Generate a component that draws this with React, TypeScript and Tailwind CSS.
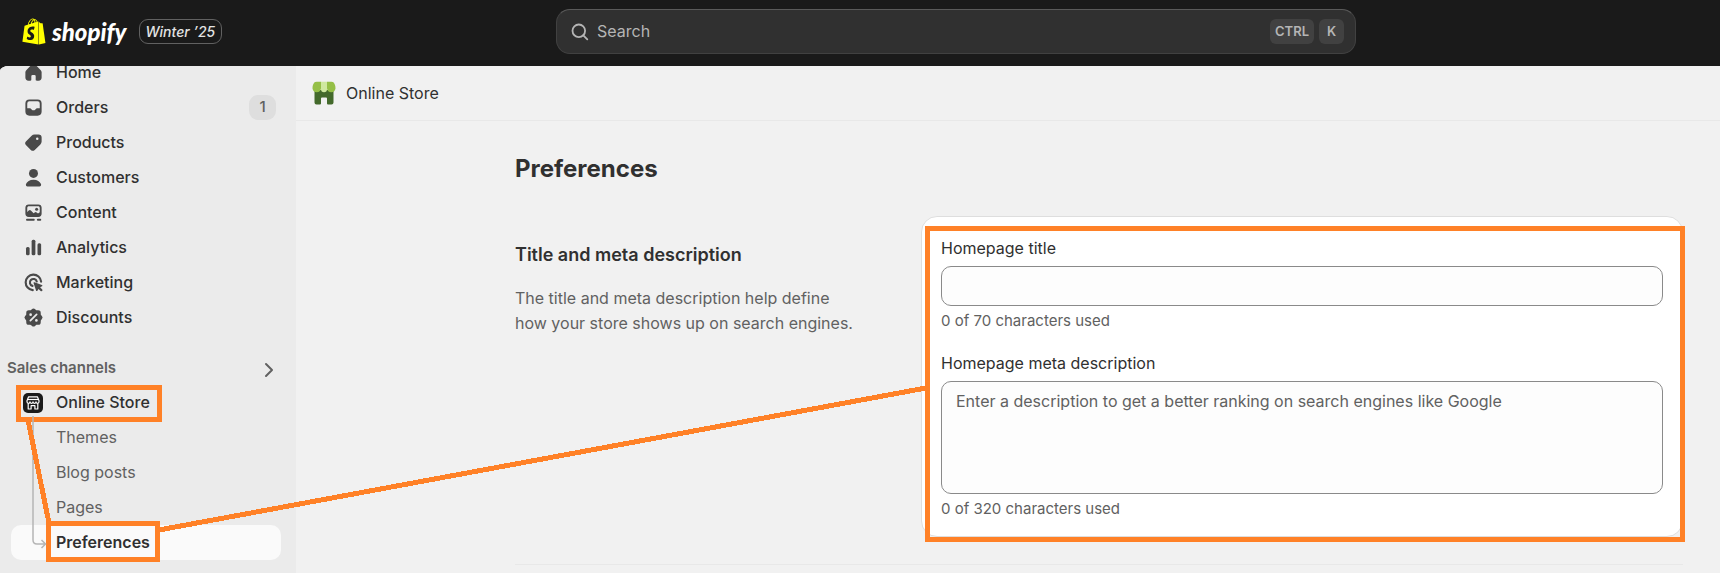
import type { ReactNode } from "react";
import { ChevronRight } from "lucide-react";
import { FaShopify } from "react-icons/fa";

function Icon({ children }: { children: ReactNode }) {
  return (
    <svg
      viewBox="0 0 20 20"
      className="size-[25px] shrink-0 fill-[#4a4a4a]"
      fillRule="evenodd"
      aria-hidden="true"
    >
      {children}
    </svg>
  );
}

const navItems: { label: string; badge?: string; icon: ReactNode }[] = [
  {
    label: "Home",
    icon: (
      <path d="M10 3c-.5 0-1 .2-1.4.6L4.2 8.1c-.45.5-.7 1.1-.7 1.7V14A2.5 2.5 0 0 0 6 16.5h1.5c.41 0 .75-.34.75-.75V13a1 1 0 0 1 1-1h1.5a1 1 0 0 1 1 1v2.75c0 .41.34.75.75.75H14a2.5 2.5 0 0 0 2.5-2.5V9.8c0-.6-.25-1.2-.7-1.7l-4.4-4.5C11 3.2 10.5 3 10 3Z" />
    ),
  },
  {
    label: "Orders",
    badge: "1",
    icon: (
      <path d="M6.75 3.5h6.5a3.25 3.25 0 0 1 3.25 3.25v6.5a3.25 3.25 0 0 1-3.25 3.25h-6.5a3.25 3.25 0 0 1-3.25-3.25v-6.5A3.25 3.25 0 0 1 6.75 3.5ZM5 6.75V10.5h2.1c.45 0 .85.24 1.08.6l.3.5a1 1 0 0 0 .86.5h1.32a1 1 0 0 0 .86-.5l.3-.5c.23-.36.63-.6 1.08-.6H15V6.75A1.75 1.75 0 0 0 13.25 5h-6.5A1.75 1.75 0 0 0 5 6.75Z" />
    ),
  },
  {
    label: "Products",
    icon: (
      <path d="M10.8 3.5h3.2A2.5 2.5 0 0 1 16.5 6v3.2c0 .9-.35 1.7-1 2.3L11 15.9a2.25 2.25 0 0 1-3.15 0L4.1 12.2a2.25 2.25 0 0 1 0-3.2l4.4-4.5a3.2 3.2 0 0 1 2.3-1ZM13 8a1 1 0 1 0 0-2 1 1 0 0 0 0 2Z" />
    ),
  },
  {
    label: "Customers",
    icon: (
      <>
        <circle cx="10" cy="6.7" r="3.6" />
        <path d="M4 15.2C4.7 13.2 7 11.7 10 11.7s5.3 1.5 6 3.5c.4 1.2-.3 1.9-1.2 1.9H5.2c-.9 0-1.6-.7-1.2-1.9Z" />
      </>
    ),
  },
  {
    label: "Content",
    icon: (
      <>
        <path d="M6.25 3.5h7.5a2.75 2.75 0 0 1 2.75 2.75v4.5a2.75 2.75 0 0 1-2.75 2.75h-7.5a2.75 2.75 0 0 1-2.75-2.75v-4.5A2.75 2.75 0 0 1 6.25 3.5ZM5 6.25v3.3l1.2-1.2a1.2 1.2 0 0 1 1.7 0l2.2 2.3.8-.7a1.2 1.2 0 0 1 1.6 0l1.1.9L15 9.7V6.25C15 5.56 14.44 5 13.75 5h-7.5C5.56 5 5 5.56 5 6.25Z" />
        <circle cx="12.5" cy="7.4" r="1.2" />
        <rect x="4" y="15" width="7" height="1.5" rx=".75" />
        <rect x="12.7" y="15" width="3.5" height="1.5" rx=".75" />
      </>
    ),
  },
  {
    label: "Analytics",
    icon: (
      <>
        <rect x="4" y="9.5" width="2.9" height="6.7" rx="1.2" />
        <rect x="8.5" y="3.8" width="3" height="12.4" rx="1.2" />
        <rect x="13.2" y="6.5" width="2.9" height="9.7" rx="1.2" />
      </>
    ),
  },
  {
    label: "Marketing",
    icon: (
      <>
        <g fill="none" stroke="#4a4a4a" strokeWidth="1.7" strokeLinecap="round">
          <path d="M16.1 9.3A6.2 6.2 0 1 0 9.4 16.1" />
          <path d="M12.6 9.2A2.8 2.8 0 1 0 9.2 12.7" />
        </g>
        <path d="m10.1 10.5 2 6c.2.5.8.5 1 .1l.9-1.5 1.7 1.7c.3.3.7.3 1 0l.3-.3c.3-.3.3-.7 0-1l-1.7-1.7 1.5-.8c.5-.3.4-.9-.1-1.1l-5.9-2.1c-.5-.2-.9.2-.7.7Z" />
      </>
    ),
  },
  {
    label: "Discounts",
    icon: (
      <>
        <path d="M8.6 3.4a2 2 0 0 1 2.8 0l.5.5c.2.2.5.3.8.3h.8a2.2 2.2 0 0 1 2.3 2.3v.8c0 .3.1.6.3.8l.5.5a2 2 0 0 1 0 2.8l-.5.5c-.2.2-.3.5-.3.8v.8a2.2 2.2 0 0 1-2.3 2.3h-.8c-.3 0-.6.1-.8.3l-.5.5a2 2 0 0 1-2.8 0l-.5-.5a1.1 1.1 0 0 0-.8-.3h-.8a2.2 2.2 0 0 1-2.3-2.3v-.8c0-.3-.1-.6-.3-.8l-.5-.5a2 2 0 0 1 0-2.8l.5-.5c.2-.2.3-.5.3-.8v-.8a2.2 2.2 0 0 1 2.3-2.3h.8c.3 0 .6-.1.8-.3Z" />
        <path d="m7.5 12.5 5-5" stroke="#ebebeb" strokeWidth="1.4" strokeLinecap="round" />
        <circle cx="7.7" cy="7.7" r="1.05" fill="#ebebeb" />
        <circle cx="12.3" cy="12.3" r="1.05" fill="#ebebeb" />
      </>
    ),
  },
];

const storePages = ["Themes", "Blog posts", "Pages"];

function StoreBadgeIcon() {
  return (
    <svg viewBox="0 0 20 20" className="size-5 shrink-0" fill="none" aria-hidden="true">
      <rect width="20" height="20" rx="5" fill="#1a1a1a" />
      <g stroke="#fff" strokeWidth="1.2" strokeLinejoin="round">
        <path d="M5.6 3.8h8.8l1.6 4v1a1.5 1.5 0 0 1-3 0 1.5 1.5 0 0 1-3 0 1.5 1.5 0 0 1-3 0 1.5 1.5 0 0 1-3 0v-1Z" />
        <path d="M5 6.5h10" />
        <path d="M5.2 10.5V16h2.9v-3.3h3.8V16h2.9v-5.5" />
      </g>
    </svg>
  );
}

function StorefrontIcon() {
  return (
    <svg viewBox="0 0 24 24" className="size-6 shrink-0" aria-hidden="true">
      <path d="M2.500 9h19v12.500a2 2 0 0 1-2 2H16a1 1 0 0 1-1-1v-5a1 1 0 0 0-1-1h-4a1 1 0 0 0-1 1v5a1 1 0 0 1-1 1H4.500a2 2 0 0 1-2-2Z" fill="#43692b" />
      <path d="M4.500.7H9V7.500a4.300 4.300 0 0 1-8.500 0C.5 5 1.200 3 2.300 1.600c.5-.6 1.300-.9 2.200-.9ZM15 .7h4.500c.9 0 1.700.3 2.200.9 1.100 1.400 1.800 3.400 1.800 5.900a4.300 4.300 0 0 1-8.500 0Z" fill="#95bf47" />
      <path d="M9 .7h6v7.600a3 3 0 0 1-6 0Z" fill="#cfe8a0" />
    </svg>
  );
}

export default function App() {
  return (
    <div className="relative flex min-h-screen flex-col bg-[#1a1a1a] font-['Inter',sans-serif] text-base text-[#303030]">
      <header className="flex h-[66px] shrink-0 items-center pb-[3px]">
        <div className="flex w-48 shrink-0 items-center pl-[22px] whitespace-nowrap">
          <a href="#" className="flex items-center gap-1.5 text-white" aria-label="shopify">
            <FaShopify className="h-[27px] w-6 text-[#ffff00]" aria-hidden="true" />
            <span className="font-['Lato',sans-serif] text-2xl leading-6 font-black italic">shopify</span>
          </a>
          <span className="ml-3 flex h-[25px] items-center rounded-[9px] border border-[#616161] px-1.5 text-sm font-medium text-[#e3e3e3] italic">
            Winter ’25
          </span>
        </div>

        <div className="flex flex-1 justify-center">
          <button
            type="button"
            className="flex h-[45px] w-full max-w-[800px] items-center rounded-[14px] border border-[#414141] border-t-[#5a5a5a] bg-[#303030] pr-[11px] pl-[14px] text-[#b5b5b5]"
          >
            <svg viewBox="0 0 18 18" className="size-[18px]" fill="none" stroke="currentColor" strokeWidth="1.8" aria-hidden="true">
              <circle cx="7.8" cy="7.8" r="6.3" />
              <path d="m12.3 12.3 4 4" strokeLinecap="round" />
            </svg>
            <span className="ml-2 flex-1 pb-0.5 text-left">Search</span>
            <span className="flex gap-[5px] text-[13px] font-semibold">
              <kbd className="flex h-[25px] items-center rounded-md bg-[#414141] px-[5px] font-[inherit]">CTRL</kbd>
              <kbd className="flex h-[25px] w-[25px] items-center justify-center rounded-md bg-[#414141] font-[inherit]">K</kbd>
            </span>
          </button>
        </div>
      </header>

      <div className="flex flex-1 overflow-hidden rounded-tl-[9px_5px] bg-[#f1f1f1]">
        <aside className="w-[296px] shrink-0 bg-[#ebebeb] pr-[15px] pl-[11px]">
          <nav className="-mt-[11px] font-medium">
            {navItems.map((item) => (
              <a key={item.label} href="#" className="flex h-[35px] items-center gap-2.5 pr-[5px] pl-[10px]">
                <Icon>{item.icon}</Icon>
                <span className="flex-1 pb-0.5">{item.label}</span>
                {item.badge && (
                  <span className="flex h-[25px] w-[27px] items-center justify-center rounded-[9px] bg-[#dedede] text-[15px] text-[#616161]">
                    {item.badge}
                  </span>
                )}
              </a>
            ))}

            <button
              type="button"
              className="-ml-1 flex h-[50px] w-[274px] items-center justify-between pt-4 text-left text-[15px] font-semibold text-[#616161]"
            >
              Sales channels
              <ChevronRight size={24} className="mt-1" aria-hidden="true" />
            </button>

            <div className="relative">
              <a href="#" className="relative flex h-[35px] items-center pl-3">
                <StoreBadgeIcon />
                <span className="ml-[13px] pb-0.5">Online Store</span>
                <span className="absolute top-0 left-[5px] h-[37px] w-[146px] border-5 border-[#ff8127]" />
              </a>
              {storePages.map((page) => (
                <a key={page} href="#" className="flex h-[35px] items-center pb-0.5 pl-[45px] font-normal text-[#616161]">
                  {page}
                </a>
              ))}
              <a
                href="#"
                aria-current="page"
                className="relative flex h-[35px] items-center rounded-[10px] bg-[#fafafa] pb-0.5 pl-[45px] font-semibold"
              >
                Preferences
                <span className="absolute -top-1 left-[35px] h-[41px] w-[114px] border-5 border-[#ff8127]" />
              </a>
              <svg viewBox="0 0 16 136" className="absolute top-[30px] left-[21px] h-[136px] w-4" fill="none" stroke="#b5b5b5" strokeWidth="1.5" aria-hidden="true">
                <path d="M1 1v124q0 4 4 4h8M9.5 125l4 4-4 4" />
              </svg>
            </div>
          </nav>
        </aside>

        <main className="min-w-0 flex-1">
          <div className="flex h-[55px] items-center gap-2.5 border-b border-[#e8e8e8] pl-4">
            <StorefrontIcon />
            <span>Online Store</span>
          </div>

          <div className="pr-[37px] pl-[219px]">
            <h1 className="pt-[33px] text-2xl leading-[30px] font-bold">Preferences</h1>

            <section className="mt-8 grid grid-cols-[1fr_2fr] gap-[25px] border-b border-[#e8e8e8] pb-[27px]">
              <div className="pt-[26px] pr-10">
                <h2 className="text-lg leading-[25px] font-semibold">Title and meta description</h2>
                <p className="mt-[19px] leading-[25px] text-[#616161]">
                  The title and meta description help define how your store shows up on search engines.
                </p>
              </div>

              <form className="relative flex flex-col rounded-2xl border border-[#dedede] bg-white px-[19px] pt-[19px] pb-[17px]">
                <label htmlFor="homepage-title" className="leading-[25px]">
                  Homepage title
                </label>
                <input
                  id="homepage-title"
                  type="text"
                  aria-describedby="homepage-title-count"
                  className="mt-[5px] h-10 rounded-[10px] border border-[#8a8a8a] bg-[#fdfdfd] px-3.5"
                />
                <p id="homepage-title-count" className="mt-[5px] text-[15px] leading-5 text-[#616161]">
                  0 of 70 characters used
                </p>

                <label htmlFor="homepage-description" className="mt-5 leading-[25px]">
                  Homepage meta description
                </label>
                <textarea
                  id="homepage-description"
                  aria-describedby="homepage-description-count"
                  placeholder="Enter a description to get a better ranking on search engines like Google"
                  className="mt-[5px] h-[113px] resize-none rounded-[10px] border border-[#8a8a8a] bg-[#fdfdfd] px-3.5 py-[7px] leading-[25px] placeholder:text-[#616161]"
                />
                <p id="homepage-description-count" className="mt-[5px] text-[15px] leading-5 text-[#616161]">
                  0 of 320 characters used
                </p>
                <span className="pointer-events-none absolute top-[9px] -right-[3px] -bottom-[6px] left-[3px] border-5 border-[#ff8127]" />
              </form>
            </section>
          </div>
        </main>
      </div>

      {/* connectors between the highlighted boxes */}
      <svg
        width="930"
        height="573"
        className="pointer-events-none absolute top-0 left-0"
        stroke="#ff8127"
        strokeWidth="5"
        shapeRendering="crispEdges"
        aria-hidden="true"
      >
        <path d="M28 420 49 523M159 530 926 388" fill="none" />
      </svg>
    </div>
  );
}
